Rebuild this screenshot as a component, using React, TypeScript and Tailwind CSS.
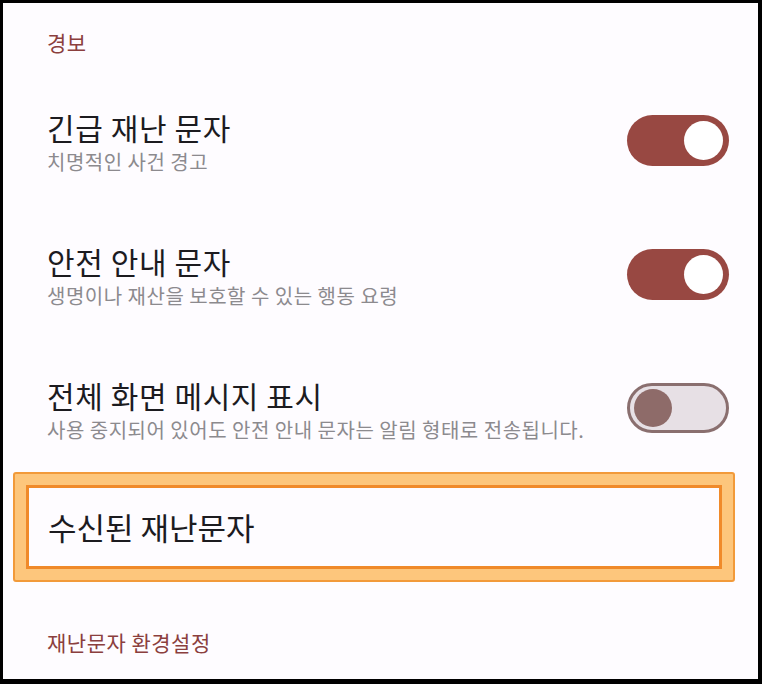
import React from "react";

const FONT = "font-['Noto_Sans_CJK_KR','Noto_Sans',sans-serif]";

function Toggle({ on }: { on: boolean }) {
  if (on) {
    return (
      <div className="relative h-[51px] w-[102px] shrink-0 rounded-full bg-[#984842]">
        <div className="absolute right-[6px] top-[6px] h-[39px] w-[39px] rounded-full bg-white" />
      </div>
    );
  }
  return (
    <div className="relative h-[50px] w-[102px] shrink-0 rounded-full border-[3px] border-[#8a6f6f] bg-[#e7e0e5]">
      <div className="absolute left-[4px] top-[3px] h-[38px] w-[38px] rounded-full bg-[#8e6b69]" />
    </div>
  );
}

function SettingRow({
  title,
  sub,
  on,
  className,
}: {
  title: string;
  sub: string;
  on: boolean;
  className: string;
}) {
  return (
    <div className={`flex items-start justify-between pl-[44px] pr-[29px] ${className}`}>
      <div className="flex flex-col">
        <div className="text-[30px] leading-[36px] tracking-[0.6px] text-[#1c1b1f]">{title}</div>
        <div className="mt-[3px] text-[20px] leading-[28px] tracking-[0.5px] text-[#8c8a8e]">{sub}</div>
      </div>
      <div className="mt-[6px]">
        <Toggle on={on} />
      </div>
    </div>
  );
}

export default function App() {
  return (
    <div className={`h-[684px] w-[762px] bg-black pb-[5px] pl-[3px] pr-[4px] pt-[3px] ${FONT}`}>
      <div className="flex h-full w-full flex-col bg-[#fefcff]">
        <div className="mt-[25px] pl-[44px] text-[21px] leading-[28px] tracking-[0.5px] text-[#8b3f3e]">경보</div>

        <SettingRow className="mt-[53px]" title="긴급 재난 문자" sub="치명적인 사건 경고" on />
        <SettingRow
          className="mt-[67px]"
          title="안전 안내 문자"
          sub="생명이나 재산을 보호할 수 있는 행동 요령"
          on
        />
        <SettingRow
          className="mt-[67px]"
          title="전체 화면 메시지 표시"
          sub="사용 중지되어 있어도 안전 안내 문자는 알림 형태로 전송됩니다."
          on={false}
        />

        <div className="ml-[10px] mt-[28px] h-[110px] w-[722px] rounded-[3px] border-2 border-[#f29a3a] bg-[#fdc67c] p-[11px]">
          <div className="flex h-full w-full items-center border-[3px] border-[#f08a2a] bg-[#fefcff] pl-[19px]">
            <span className="text-[31px] leading-[38px] text-[#1c1b1f]">수신된 재난문자</span>
          </div>
        </div>

        <div className="mt-[46px] pl-[44px] text-[21px] leading-[28px] tracking-[0.5px] text-[#8b3f3e]">
          재난문자 환경설정
        </div>
      </div>
    </div>
  );
}
